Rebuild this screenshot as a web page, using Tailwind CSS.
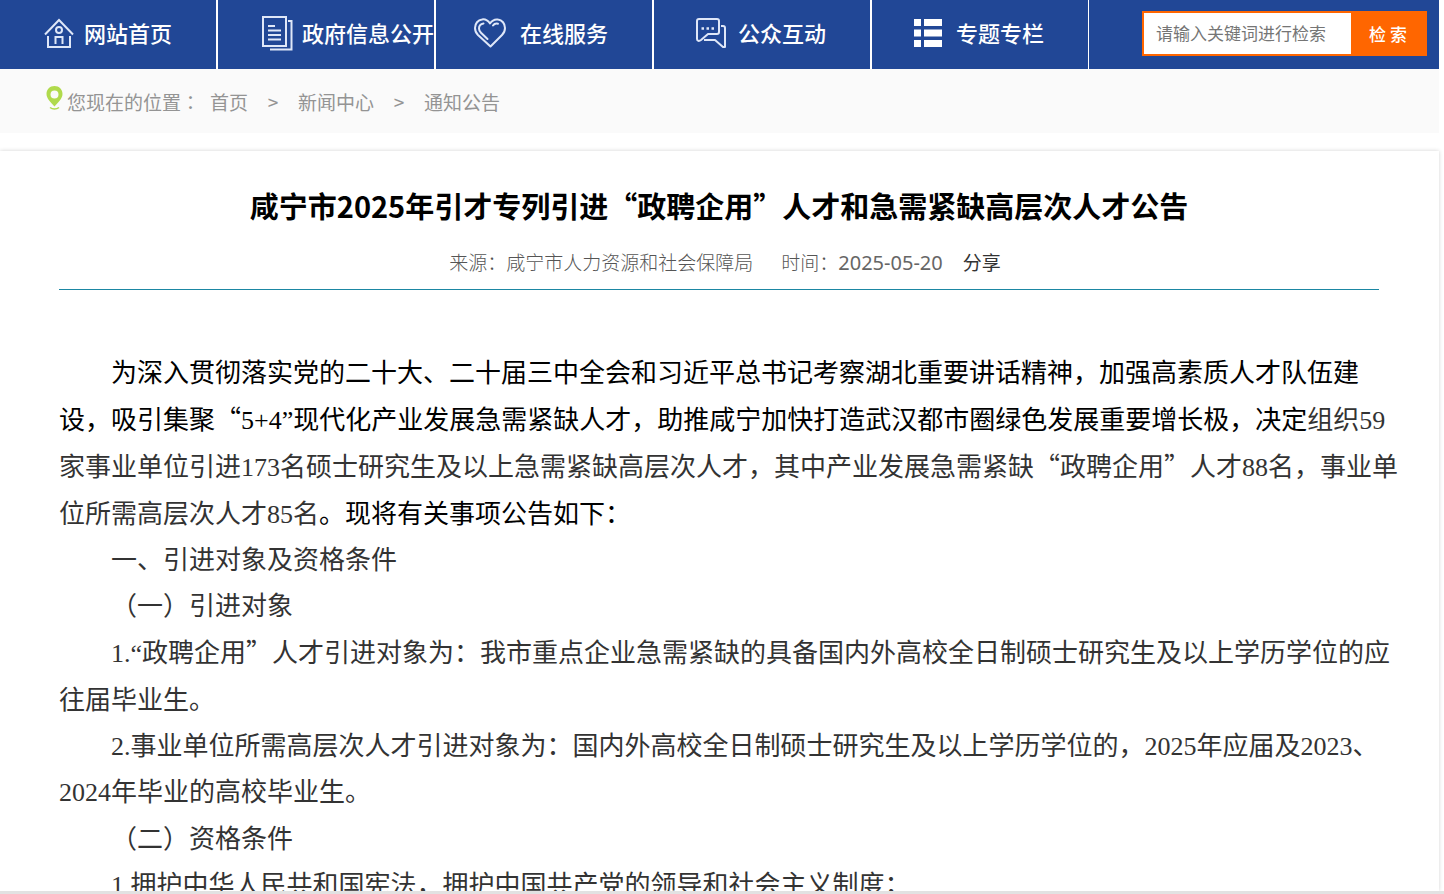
<!DOCTYPE html>
<html lang="zh-CN">
<head>
    <meta charset="UTF-8">
    <meta name="viewport" content="width=device-width, initial-scale=1.0">
    <title>咸宁市2025年引才专列引进“政聘企用”人才和急需紧缺高层次人才公告</title>
    <script src="https://cdn.jsdelivr.net/npm/@tailwindcss/browser@4"></script>
</head>
<body class="h-screen overflow-hidden flex flex-col bg-white border-b-3 border-[#e2e2e2] font-['Noto_Sans_CJK_SC',sans-serif]">
    <header class="mr-[5px] h-[69px] shrink-0 flex items-center justify-between bg-[#214796] text-white">
        <nav class="flex h-full text-[22px] font-medium whitespace-nowrap">
            <a href="#" class="w-[218px] pb-1 flex items-center border-r-2 border-white">
                <span class="w-[84px] pl-11 shrink-0">
                    <svg class="w-[30px] h-[30px]" viewBox="0 0 30 30" fill="none" stroke="#dfe7f8" stroke-width="2">
                        <path d="M1 16.500L15 2l14 14.500M4 18v11h22V18M11.500 26v-7h7v7"/>
                        <circle cx="15" cy="12" r="3"/>
                    </svg>
                </span>
                网站首页
            </a>
            <a href="#" class="w-[218px] pb-1 flex items-center border-r-2 border-white">
                <span class="w-[84px] pl-11 shrink-0">
                    <svg class="w-[31px] h-[36px]" viewBox="0 0 31 36" fill="none" stroke="#dfe7f8" stroke-width="2">
                        <path d="M1 2h23v29H1zM26 6h3.500v28.500H8"/>
                        <path d="M6 11h7M6 15.500h13M6 20h13M6 24.500h13"/>
                    </svg>
                </span>
                政府信息公开
            </a>
            <a href="#" class="w-[218px] pb-1 flex items-center border-r-2 border-white">
                <span class="w-[84px] pl-[38px] shrink-0">
                    <svg class="w-8 h-[30px]" viewBox="0 0 32 30" fill="none" stroke="#dfe7f8" stroke-width="2" stroke-linecap="round" stroke-linejoin="round">
                        <path d="M16 5.500C13.500 2 10.500 1 8 1.500 4 2 1 5.500 1 10c0 3 1 5 3 7l12.500 11.500L28 17c2-2 3-4.500 3-7 0-4.500-3-8-7-8.500-3-.5-6 1-8 4z"/>
                        <path d="M9.500 5.500C6.500 6 5 8 5 10.500c0 1.800.8 3 2 4.200l6.500 6.300M19 7.500c1-1.500 3-2.300 5-1.800"/>
                    </svg>
                </span>
                在线服务
            </a>
            <a href="#" class="w-[218px] pb-1 flex items-center border-r-2 border-white">
                <span class="w-[84px] pl-[42px] shrink-0">
                    <svg class="w-[30px] h-[30px]" viewBox="0 0 30 30" fill="none" stroke="#dfe7f8" stroke-width="2" stroke-linejoin="round">
                        <path d="M3 1h18c1.200 0 2 .8 2 2v11c0 1.200-.8 2-2 2H12l-7 6c-2 1.500-4 1-4-1V3c0-1.200.8-2 2-2z"/>
                        <path d="M25 8h2c1.200 0 2 .8 2 2v19h-2l-8-7H8"/>
                        <path d="M5.500 10.500h2.500M10.500 10.500h2.500M15.500 10.500h2.500" stroke-width="2.500"/>
                    </svg>
                </span>
                公众互动
            </a>
            <a href="#" class="w-[217px] pb-1 flex items-center border-r border-white">
                <span class="w-[84px] pl-[42px] shrink-0">
                    <svg class="w-7 h-7" viewBox="0 0 28 28" fill="#ffffff">
                        <path d="M0 0h7v7H0zM10 0h18v7H10zM0 10.500h7v7H0zM10 10.500h18v7H10zM0 21h7v7H0zM10 21h18v7H10z"/>
                    </svg>
                </span>
                专题专栏
            </a>
        </nav>
        <form class="flex w-[285px] h-[45px] mr-3 mb-[2px] border-2 border-[#ff6600] bg-white text-[17px]">
            <input type="text" aria-label="关键词" placeholder="请输入关键词进行检索" class="min-w-0 flex-1 pl-3 pb-[2px] outline-none text-[#757575] placeholder:text-[#757575]">
            <button type="submit" class="w-[74px] bg-[#ff6600] text-white font-medium">检 索</button>
        </form>
    </header>

    <nav aria-label="当前位置" class="mr-[5px] h-16 shrink-0 flex items-center pl-[46px] pt-[2px] bg-[#fafafa] text-[19px] text-[#949494] whitespace-nowrap">
        <svg class="w-[17px] h-6 mr-1 mb-2" viewBox="0 0 17 24" fill="none">
            <path fill="#b0da4c" fill-rule="evenodd" d="M8.500 0C3.800 0 .5 3.500.5 8c0 4.600 4.500 8.500 8 12.500 3.500-4 8-7.900 8-12.500 0-4.500-3.300-8-8-8zm0 4.500a4 4 0 1 1 0 8 4 4 0 0 1 0-8z"/>
            <path stroke="#b0da4c" stroke-width="1.500" d="M4 21.500c2.500 2 6.500 2 9 0"/>
        </svg>
        <span class="w-[143px]">您现在的位置<span class="font-['Noto_Sans_CJK_TC']" lang="zh-TW">：</span></span>
        <a href="#">首页</a>
        <span class="w-[50px] text-center">&gt;</span>
        <a href="#">新闻中心</a>
        <span class="w-[50px] text-center">&gt;</span>
        <a href="#">通知公告</a>
    </nav>

    <main class="mt-[18px] mr-[5px] min-h-0 flex-1 overflow-hidden pl-[59px] pr-[60px] pt-[30px] bg-white shadow-[0_0_4px_rgba(0,0,0,0.18)]">
        <h1 class="text-center text-[29px] leading-[48px] font-bold text-black">咸宁市2025年引才专列引进“政聘企用”人才和急需紧缺高层次人才公告</h1>
        <div class="flex justify-center pt-[17px] pb-[11px] pl-3 text-[19px] leading-8 font-light text-[#555] border-b border-solid border-b-[#1b87a3]">
            <span class="mr-7">来源：咸宁市人力资源和社会保障局</span>
            <span class="mr-5">时间：<span class="text-xl leading-none font-normal text-[#666] font-['Noto_Sans']">2025-05-20</span></span>
            <a href="#" class="font-normal text-[#333]">分享</a>
        </div>

        <!-- 正文 -->
        <article class="mt-15 -mr-6 text-[26px] leading-[46px] text-[#333] font-['Liberation_Serif','Noto_Sans_CJK_SC',serif] [&>p]:indent-[2em]">
            <p class="leading-[47px]"><span class="text-black">为深入贯彻落实党的二十大、二十届三中全会和习近平总书记考察湖北重要讲话精神，加强高素质人才队伍建设，吸引集聚<span class="leading-none font-['Noto_Sans_CJK_SC']">“</span>5+4”现代化产业发展急需紧缺人才，助推咸宁加快打造武汉都市圈绿色发展重要增长极，决定</span>组织59家事业单位引进173名硕士研究生及以上急需紧缺高层次人才，其中产业发展急需紧缺<span class="leading-none font-['Noto_Sans_CJK_SC']">“政聘企用”</span>人才88名，事业单位所需高层次人才85名<span class="text-black">。现将有关事项公告如下：</span></p>
            <p>一、引进对象及资格条件</p>
            <p>（一）引进对象</p>
            <p class="leading-[47px]">1.“政聘企用<span class="leading-none font-['Noto_Sans_CJK_SC']">”</span>人才引进对象为：我市重点企业急需紧缺的具备国内外高校全日制硕士研究生及以上学历学位的应往届毕业生。</p>
            <p>2.事业单位所需高层次人才引进对象为：国内外高校全日制硕士研究生及以上学历学位的，2025年应届及2023、2024年毕业的高校毕业生。</p>
            <p class="leading-[47px]">（二）资格条件</p>
            <p>1.拥护中华人民共和国宪法，拥护中国共产党的领导和社会主义制度；</p>
        </article>
    </main>
</body>
</html>
